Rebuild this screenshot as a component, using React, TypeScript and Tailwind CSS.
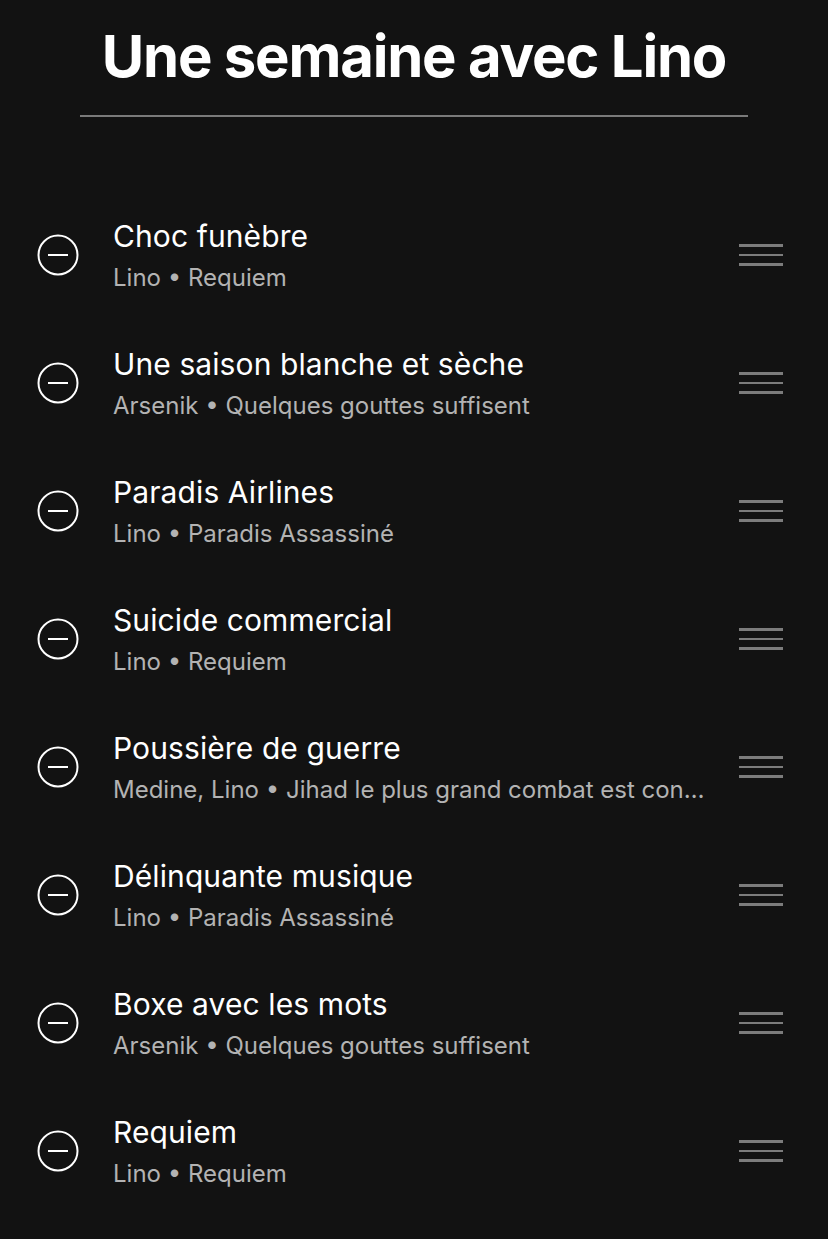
const tracks = [
  { title: "Choc funèbre", sub: "Lino • Requiem" },
  { title: "Une saison blanche et sèche", sub: "Arsenik • Quelques gouttes suffisent" },
  { title: "Paradis Airlines", sub: "Lino • Paradis Assassiné" },
  { title: "Suicide commercial", sub: "Lino • Requiem" },
  { title: "Poussière de guerre", sub: "Medine, Lino • Jihad le plus grand combat est contre soi-même" },
  { title: "Délinquante musique", sub: "Lino • Paradis Assassiné" },
  { title: "Boxe avec les mots", sub: "Arsenik • Quelques gouttes suffisent" },
  { title: "Requiem", sub: "Lino • Requiem" },
];

function RemoveIcon() {
  return (
    <svg width="42" height="42" viewBox="0 0 42 42" fill="none">
      <circle cx="21" cy="21" r="19.5" stroke="white" strokeWidth="2" />
      <line x1="11" y1="21" x2="31" y2="21" stroke="white" strokeWidth="2" />
    </svg>
  );
}

function DragHandle() {
  return (
    <div className="flex w-[44px] flex-col gap-[7px]">
      <span className="block h-[2.5px] bg-[#7c7c7c]" />
      <span className="block h-[2.5px] bg-[#7c7c7c]" />
      <span className="block h-[2.5px] bg-[#7c7c7c]" />
    </div>
  );
}

export default function App() {
  return (
    <div
      className="min-h-[1239px] bg-[#121212] text-white"
      style={{ fontFamily: "Inter, 'Noto Sans', sans-serif" }}
    >
      {/* Header */}
      <div className="px-[80px] pt-[17px]">
        <h1 className="text-center text-[58px] font-bold leading-[78px] tracking-[-1.2px]">
          Une semaine avec Lino
        </h1>
        <div className="mt-[20px] h-[2px] bg-[#7a7a7a]" />
      </div>

      {/* Track list */}
      <ul className="mt-[74px]">
        {tracks.map((t, i) => (
          <li key={i} className="flex h-[128px] items-center pl-[37px] pr-[45px]">
            <RemoveIcon />
            <div className="ml-[34px] mt-[4px] min-w-0 flex-1 pr-[28px]">
              <p className="truncate text-[30px] leading-[42px] tracking-[0.1px]">{t.title}</p>
              <p className="truncate text-[24px] leading-[42px] text-[#b3b3b3]">{t.sub}</p>
            </div>
            <DragHandle />
          </li>
        ))}
      </ul>
    </div>
  );
}
